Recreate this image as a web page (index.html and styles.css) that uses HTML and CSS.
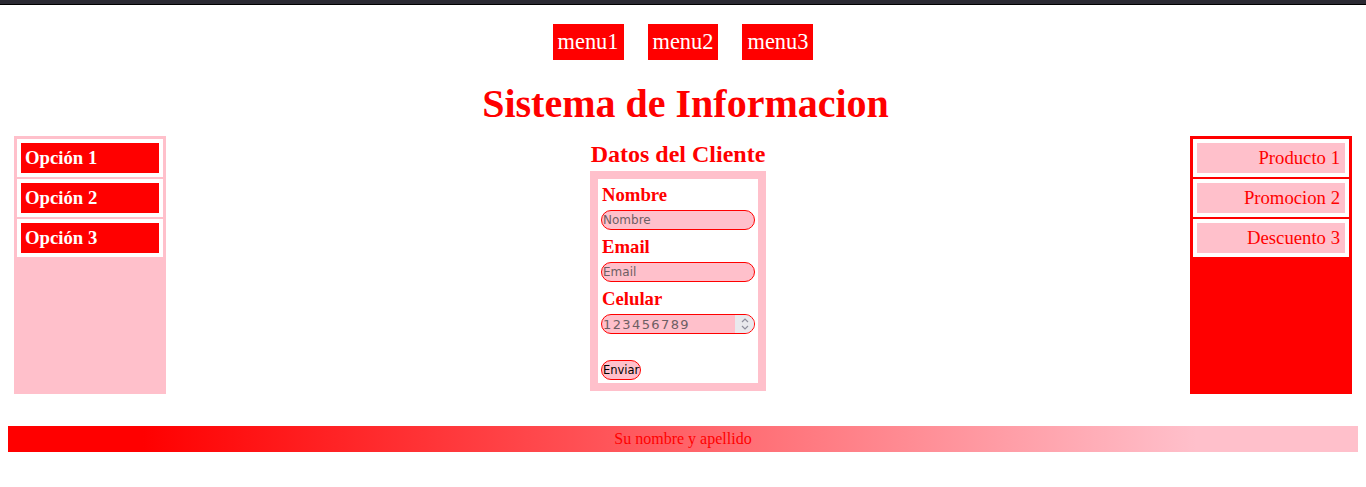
FILE: index.html
```html
<!DOCTYPE html>
<html lang="es">
<head>
<meta charset="utf-8">
<title>Sistema de Informacion</title>
<link rel="stylesheet" href="styles.css">
</head>
<body>
<div class="topbar"></div>
<div class="page">
  <nav class="menu">
    <a class="menu-item">menu1</a>
    <a class="menu-item">menu2</a>
    <a class="menu-item">menu3</a>
  </nav>
  <h1 class="title">Sistema de Informacion</h1>
  <div class="row">
    <aside class="side side-left">
      <div class="side-item">Opción 1</div>
      <div class="side-item">Opción 2</div>
      <div class="side-item">Opción 3</div>
    </aside>
    <section class="center">
      <h2 class="subtitle">Datos del Cliente</h2>
      <form class="form">
        <label class="label">Nombre</label>
        <input class="field" type="text" placeholder="Nombre">
        <label class="label">Email</label>
        <input class="field" type="text" placeholder="Email">
        <label class="label">Celular</label>
        <div class="number-wrap">
          <input class="field field-number" type="text" placeholder="123456789">
          <span class="spinner">
            <svg width="10" height="14" viewBox="0 0 10 14">
              <path d="M2 5 L5 2 L8 5" fill="none" stroke="#8f8f9d" stroke-width="1.2"/>
              <path d="M2 9 L5 12 L8 9" fill="none" stroke="#8f8f9d" stroke-width="1.2"/>
            </svg>
          </span>
        </div>
        <button class="btn" type="button">Enviar</button>
      </form>
    </section>
    <aside class="side side-right">
      <div class="side-item">Producto 1</div>
      <div class="side-item">Promocion 2</div>
      <div class="side-item">Descuento 3</div>
    </aside>
  </div>
  <footer class="footer">Su nombre y apellido</footer>
</div>
</body>
</html>
```
FILE: styles.css
```css
html, body {
  margin: 0;
  padding: 0;
  background: #ffffff;
  font-family: "Liberation Serif", "Times New Roman", serif;
}
.topbar {
  height: 4px;
  background: #2b2a33;
  border-bottom: 1px solid #000;
}
.page {
  padding: 0 8px;
}
.menu {
  display: flex;
  justify-content: center;
  gap: 24px;
  margin-top: 19px;
}
.menu-item {
  background: #ff0000;
  color: #ffffff;
  font-size: 22.4px;
  line-height: 26px;
  padding: 5px 5px;
}
.title {
  margin: 22px 0 10px;
  padding-left: 5px;
  text-align: center;
  color: #ff0000;
  font-size: 40px;
  line-height: 44px;
  font-weight: bold;
}
.row {
  display: flex;
  margin: 0 6px;
}
.side {
  box-sizing: border-box;
  padding: 3px;
  display: flex;
  flex-direction: column;
  gap: 2px;
}
.side-left {
  width: 152px;
  background: #ffc0cb;
}
.side-right {
  width: 162px;
  background: #ff0000;
}
.side-item {
  border: 4px solid #ffffff;
  line-height: 30px;
  font-size: 18.72px;
}
.side-left .side-item {
  background: #ff0000;
  color: #ffffff;
  font-weight: bold;
  padding: 0 4px;
}
.side-right .side-item {
  background: #ffc0cb;
  color: #ff0000;
  text-align: right;
  padding: 0 5px;
}
.center {
  flex: 1;
  display: flex;
  flex-direction: column;
  align-items: center;
  padding-bottom: 3px;
}
.subtitle {
  margin: 5px 0 3px;
  color: #ff0000;
  font-size: 24px;
  line-height: 27px;
  font-weight: bold;
}
.form {
  width: 154px;
  border: 8px solid #ffc0cb;
  padding: 3px;
  background: #fff;
  display: flex;
  flex-direction: column;
  margin: 0;
}
.label {
  color: #ff0000;
  font-weight: bold;
  font-size: 18.72px;
  line-height: 26px;
  margin: 0 0 2px 1px;
}
.field {
  box-sizing: border-box;
  width: 154px;
  height: 20px;
  margin: 0 0 4px;
  padding: 0 1px;
  border: 1px solid #ff0000;
  border-radius: 10px;
  background: #ffc0cb;
  font-family: "DejaVu Sans", sans-serif;
  font-size: 12px;
  color: #000;
  outline: none;
}
.field::placeholder {
  color: #6e5e63;
  opacity: 1;
}
.number-wrap {
  position: relative;
  width: 154px;
  height: 20px;
  margin: 0 0 26px;
}
.field-number {
  margin: 0;
  font-size: 13px;
  letter-spacing: 1.4px;
}
.spinner {
  position: absolute;
  top: 1px;
  right: 1px;
  bottom: 1px;
  width: 19px;
  background: #e9e9ed;
  border-radius: 0 9px 9px 0;
  display: flex;
  align-items: center;
  justify-content: center;
}
.btn {
  align-self: flex-start;
  height: 20px;
  padding: 0 1px;
  border: 1px solid #ff0000;
  border-radius: 10px;
  background: #ffc0cb;
  color: #000;
  font-family: "DejaVu Sans", sans-serif;
  font-size: 11.5px;
  line-height: 18px;
}
.footer {
  margin-top: 32px;
  height: 26px;
  line-height: 26px;
  text-align: center;
  font-size: 16px;
  color: #ff0000;
  background: linear-gradient(to right, #ff0000 10%, #ffc0cb 88%);
}
```
